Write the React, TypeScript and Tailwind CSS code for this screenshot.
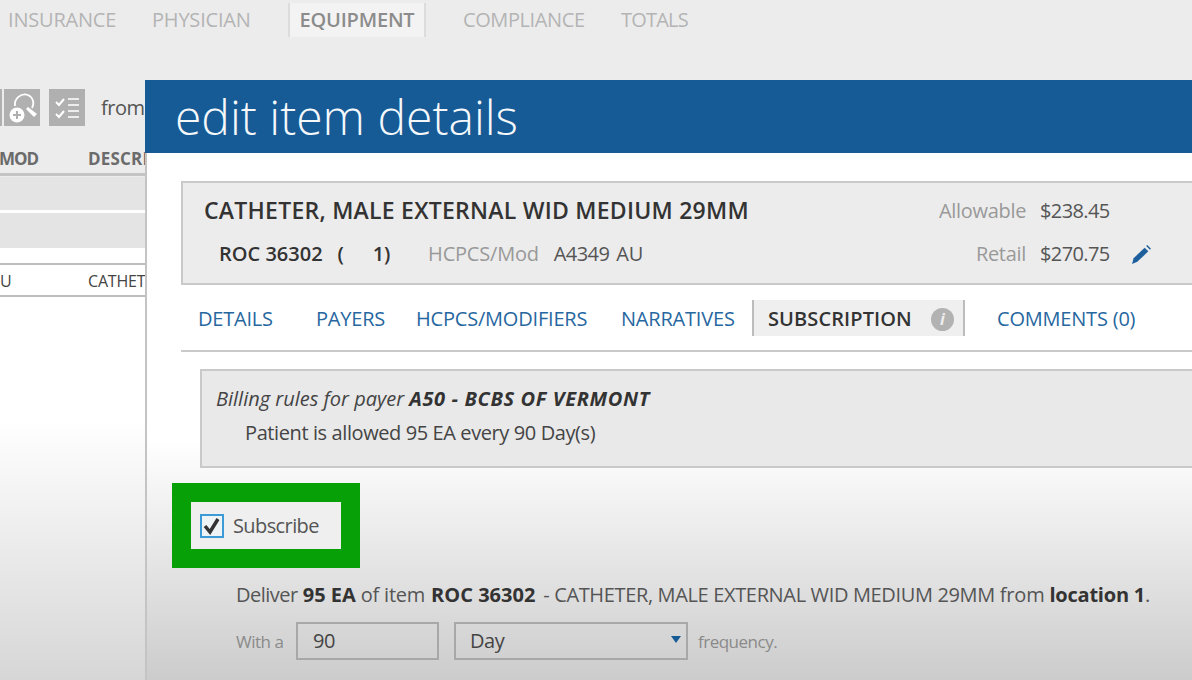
const font = { fontFamily: '"Open Sans", "Noto Sans", sans-serif' }

function NavTabs() {
  return (
    <div className="flex h-[40px] items-center pl-[8px] text-[20px] tracking-[-0.2px] text-[#b4b4b4]">
      <span className="w-[144px]">INSURANCE</span>
      <span className="w-[136px]">PHYSICIAN</span>
      <span className="flex h-[34px] w-[138px] items-center justify-center border-x-2 border-[#dcdcdc] bg-[#f3f3f3] font-semibold text-[#8c8c8c]">
        EQUIPMENT
      </span>
      <span className="ml-[37px] w-[158px] tracking-[-0.4px]">COMPLIANCE</span>
      <span className="tracking-[-0.8px]">TOTALS</span>
    </div>
  )
}

function SearchIcon() {
  return (
    <svg viewBox="0 0 36 37" className="h-[37px] w-[36px] bg-[#b0b0b0]" fill="none">
      <path d="M11 17a10 10 0 0 1 13-11 9 9 0 0 1 4 13" stroke="#fff" strokeWidth="1.8" />
      <path d="M24 18l9 7-3 3-8-8z" fill="#fff" />
      <circle cx="13" cy="26" r="7.5" fill="#fff" />
      <path d="M9 26h8M13 22v8" stroke="#b0b0b0" strokeWidth="2" />
    </svg>
  )
}

function ChecklistIcon() {
  return (
    <svg viewBox="0 0 36 37" className="ml-[9px] h-[37px] w-[36px] bg-[#b0b0b0]" fill="none" stroke="#fff">
      <path d="M7 13l3 3 5-6M7 25l3 3 5-6" strokeWidth="2" />
      <path d="M19 10h11M19 16h11M19 22h11M19 28h11" strokeWidth="1.6" />
    </svg>
  )
}

function PencilIcon() {
  return (
    <svg viewBox="0 0 20 20" className="ml-[21px] h-[21px] w-[21px]" fill="#1d5f9c">
      <path d="M1 19l1.5-5.5L13 3.5l3.5 3.5L6 17z" />
      <path d="M14.5 2l1-1 3.5 3.5-1 1z" />
    </svg>
  )
}

function Background() {
  return (
    <div className="flex h-full flex-col bg-[linear-gradient(to_bottom,#ececec_0%,#ececec_262px,#ffffff_300px,#ffffff_420px,#d6d6d6_680px)]">
      <NavTabs />
      <div className="mt-[49px] flex h-[37px] items-center">
        <div className="mr-[2px] h-[37px] w-[2px] bg-[#b0b0b0]" />
        <SearchIcon />
        <ChecklistIcon />
        <span className="ml-[16px] text-[20px] tracking-[-0.5px] text-[#555]">from</span>
      </div>
      <div className="mt-[19px] -ml-[1px] flex h-[28px] items-center text-[17px] font-bold text-[#6b6b6b]">
        <span className="w-[89px] tracking-[-1px]">MOD</span>
        <span className="tracking-[0.2px]">DESCRIPTION</span>
      </div>
      <div className="h-[3px] bg-[#c4c4c4]" />
      <div className="mt-[1px] h-[33px] bg-[#e4e4e4]" />
      <div className="h-[3px] bg-white" />
      <div className="h-[35px] bg-[#e4e4e4]" />
      <div className="h-[15px] bg-white" />
      <div className="h-[2px] bg-[#bdbdbd]" />
      <div className="flex h-[30px] items-center bg-white pt-[1px] text-[16px] tracking-[-0.2px] text-[#444]">
        <span className="w-[88px]">U</span>
        <span>CATHETER</span>
      </div>
      <div className="h-[2px] bg-[#bdbdbd]" />
    </div>
  )
}

function ItemCard() {
  return (
    <div className="flex h-[104px] justify-between border-2 border-[#c9c9c9] bg-[#ececec]">
      <div>
        <div className="mt-[12px] ml-[21px] text-[23px] leading-[30px] font-semibold tracking-[0.25px] text-[#333]">
          CATHETER, MALE EXTERNAL WID MEDIUM 29MM
        </div>
        <div className="mt-[16px] ml-[36px] flex items-center text-[20px] leading-[26px] tracking-[-0.2px] text-[#555]">
          <span className="font-semibold tracking-[0px] text-[#333]">ROC 36302</span>
          <span className="ml-[15px] font-semibold text-[#333]">(</span>
          <span className="ml-[29px] font-semibold text-[#333]">1)</span>
          <span className="ml-[38px] text-[#999]">HCPCS/Mod</span>
          <span className="ml-[15px] tracking-[-0.6px]">A4349</span>
          <span className="ml-[7px]">AU</span>
        </div>
      </div>
      <div className="mt-[15px] mr-[39px] w-[215px] text-[20px] leading-[26px] tracking-[-0.3px] text-[#555]">
        <div className="flex">
          <span className="w-[87px] text-right text-[#999]">Allowable</span>
          <span className="ml-[14px] tracking-[-0.6px]">$238.45</span>
        </div>
        <div className="mt-[17px] flex items-center">
          <span className="w-[87px] text-right text-[#999]">Retail</span>
          <span className="ml-[14px] tracking-[-0.6px]">$270.75</span>
          <PencilIcon />
        </div>
      </div>
    </div>
  )
}

function ItemTabs() {
  return (
    <div className="flex h-[67px] items-center border-b-2 border-[#c9c9c9] pt-[3px] pl-[17px] text-[20px] tracking-[-0.2px] text-[#27679f]">
      <span className="w-[118px]">DETAILS</span>
      <span className="w-[100px]">PAYERS</span>
      <span className="w-[205px]">HCPCS/MODIFIERS</span>
      <span className="w-[131px]">NARRATIVES</span>
      <span className="mb-[2px] flex h-[36px] w-[213px] items-center border-x-2 border-[#bcbcbc] bg-[#efefef] pt-[2px] pl-[14px] font-semibold tracking-[0.1px] text-[#333]">
        SUBSCRIPTION
        <span className="ml-[19px] flex h-[23px] w-[23px] items-center justify-center rounded-full bg-[#b2b2b2] text-[16px] font-bold text-[#eee] italic">
          i
        </span>
      </span>
      <span className="ml-[32px]">COMMENTS (0)</span>
    </div>
  )
}

function EditDialog() {
  return (
    <div className="absolute top-[80px] left-[145px] h-[600px] w-[1050px] border-l-2 border-[#c4c4c4] bg-[linear-gradient(to_bottom,#ffffff_0%,#ffffff_60%,#cccccc_100%)]">
      <div className="-ml-[2px] flex h-[73px] items-center bg-[#165a96] pl-[30px] text-[48px] font-light text-[#f4f8fb]">
        edit item details
      </div>
      <div className="pt-[28px] pl-[34px]">
        <ItemCard />
        <ItemTabs />
        <div className="mt-[17px] ml-[19px] h-[99px] border-2 border-[#c9c9c9] bg-[#e9e9e9] pt-[14px] pl-[14px] text-[20px] text-[#444]">
          <div className="leading-[28px] italic">
            Billing rules for payer <span className="font-bold tracking-[0.63px] text-[#333]">A50 - BCBS OF VERMONT</span>
          </div>
          <div className="mt-[7px] ml-[29px] leading-[26px] tracking-[-0.4px]">Patient is allowed 95 EA every 90 Day(s)</div>
        </div>
        <div className="mt-[15px] -ml-[9px] flex h-[85px] w-[188px] items-center border-[19px] border-[#07a007] bg-[#efefef] pl-[9px] text-[20px] tracking-[-0.6px] text-[#555]">
          <span className="flex h-[24px] w-[24px] items-center justify-center border-2 border-[#3c9ad6] bg-[#eef3f6]">
            <svg viewBox="0 0 20 20" className="h-[20px] w-[20px]" fill="none" stroke="#333" strokeWidth="3.5">
              <path d="M3 10l5 6 8-13" />
            </svg>
          </span>
          <span className="ml-[9px]">Subscribe</span>
        </div>
        <div className="mt-[13px] ml-[55px] text-[20px] leading-[28px] tracking-[-0.22px] text-[#555]">
          <span className="tracking-[-0.5px]">Deliver</span> <b className="tracking-[0px] text-[#333]">95 EA</b> of item{" "}
          <b className="ml-[1px] tracking-[0px] text-[#333]">ROC 36302</b>
          <span className="ml-[3px] tracking-[-0.35px]"> - CATHETER, MALE EXTERNAL WID MEDIUM 29MM</span> from{" "}
          <b className="text-[#333]">location 1</b>.
        </div>
        <div className="mt-[13px] ml-[55px] flex items-center text-[17px] tracking-[-0.5px] text-[#8a8a8a]">
          <span className="mt-[1px] w-[60px]">With a</span>
          <div className="flex h-[38px] w-[143px] items-center border-2 border-[#a8a8a8] pl-[15px] text-[20px] text-[#444]">90</div>
          <div className="ml-[15px] flex h-[38px] w-[234px] items-center justify-between border-2 border-[#a8a8a8] pr-[5px] pl-[14px] text-[20px] text-[#444]">
            Day
            <span className="mb-[3px] h-0 w-0 border-x-[5px] border-t-[7px] border-x-transparent border-t-[#165a96]" />
          </div>
          <span className="mt-[1px] ml-[10px]">frequency.</span>
        </div>
      </div>
    </div>
  )
}

export default function App() {
  return (
    <div className="relative h-[680px] w-[1192px] overflow-hidden" style={font}>
      <Background />
      <EditDialog />
    </div>
  )
}
